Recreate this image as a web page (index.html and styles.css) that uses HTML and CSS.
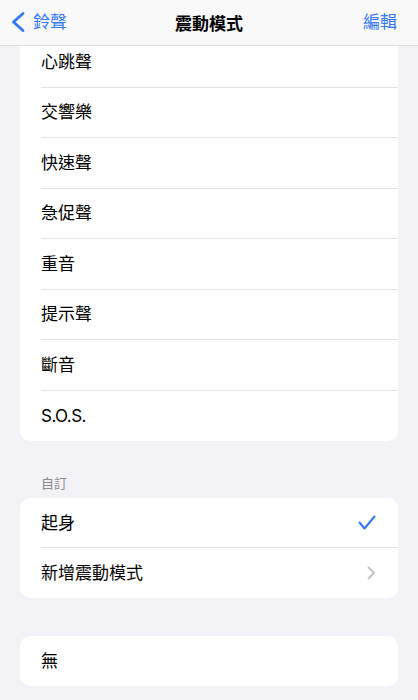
FILE: index.html
```html
<!DOCTYPE html>
<html lang="zh-Hant">
<head>
<meta charset="utf-8">
<title>震動模式</title>
<link rel="stylesheet" href="styles.css">
</head>
<body>
<header class="nav">
  <a class="nav-back">
    <svg class="back-chevron" width="14" height="22" viewBox="0 0 14 22"><path d="M12 2.5 L2.5 11 L12 19.5" fill="none" stroke="currentColor" stroke-width="2.8" stroke-linecap="round" stroke-linejoin="round"/></svg>
    <span>鈴聲</span>
  </a>
  <h1 class="nav-title">震動模式</h1>
  <a class="nav-action">編輯</a>
</header>

<main class="page">
  <ul class="group group-first">
    <li class="row">心跳聲</li>
    <li class="row">交響樂</li>
    <li class="row">快速聲</li>
    <li class="row">急促聲</li>
    <li class="row">重音</li>
    <li class="row">提示聲</li>
    <li class="row">斷音</li>
    <li class="row latin">S.O.S.</li>
  </ul>

  <div class="section-header">自訂</div>
  <ul class="group">
    <li class="row row-short">
      <span class="label">起身</span>
      <svg class="check" width="18" height="16" viewBox="0 0 18 16"><path d="M1.5 7.5 L6.5 13.5 L16.5 1.5" fill="none" stroke="currentColor" stroke-width="2.1" stroke-linecap="round" stroke-linejoin="round"/></svg>
    </li>
    <li class="row row-short">
      <span class="label">新增震動模式</span>
      <svg class="disclosure" width="9" height="14" viewBox="0 0 9 14"><path d="M1.5 1.5 L7 7 L1.5 12.5" fill="none" stroke="currentColor" stroke-width="1.9" stroke-linecap="round" stroke-linejoin="round"/></svg>
    </li>
  </ul>

  <ul class="group group-spaced">
    <li class="row row-short">無</li>
  </ul>
</main>
</body>
</html>
```
FILE: styles.css
```css
* { box-sizing: border-box; }

html, body {
  margin: 0;
  padding: 0;
  background: #f2f2f7;
}

body {
  font-family: Inter, "Noto Sans CJK TC", "Noto Sans", sans-serif;
  color: #000;
  font-size: 17px;
  height: 700px;
  overflow: hidden;
}

.nav {
  position: fixed;
  top: 0;
  left: 0;
  right: 0;
  height: 46px;
  background: #f9f9f9;
  border-bottom: 1px solid #dcdcdf;
  display: flex;
  align-items: center;
  justify-content: space-between;
  padding: 0 21px 2px 11px;
  z-index: 10;
}

.nav-back {
  display: flex;
  align-items: center;
  gap: 8px;
  color: #3478f6;
  font-size: 17px;
  line-height: 22px;
}

.back-chevron { display: block; }

.nav-title {
  position: absolute;
  left: 0;
  right: 0;
  top: 0;
  height: 46px;
  margin: 0;
  display: flex;
  align-items: center;
  justify-content: center;
  font-size: 17px;
  font-weight: 600;
  padding-bottom: 2px;
  pointer-events: none;
}

.nav-action {
  color: #3478f6;
  font-size: 17px;
  line-height: 22px;
  position: relative;
}

.page {
  padding-top: 37px;
}

.group {
  list-style: none;
  margin: 0 20px;
  padding: 0 0 0 21px;
  background: #fff;
  border-radius: 10px;
  overflow: hidden;
}

.group-first {
  border-radius: 0 0 10px 10px;
}

.group-spaced {
  margin-top: 38px;
}

.row {
  height: 50.5px;
  display: flex;
  align-items: center;
  justify-content: space-between;
  padding-right: 22px;
  border-bottom: 1px solid #e3e3e6;
  line-height: 22px;
}

.row:last-child { border-bottom: none; }

.row-short { height: 50px; }

.latin { letter-spacing: -0.5px; }

.section-header {
  padding: 33px 41px 6px;
  font-size: 13px;
  line-height: 18px;
  color: #8a8a8e;
}

.check {
  color: #3478f6;
  display: block;
}

.disclosure {
  color: #c4c4c7;
  display: block;
}
```
